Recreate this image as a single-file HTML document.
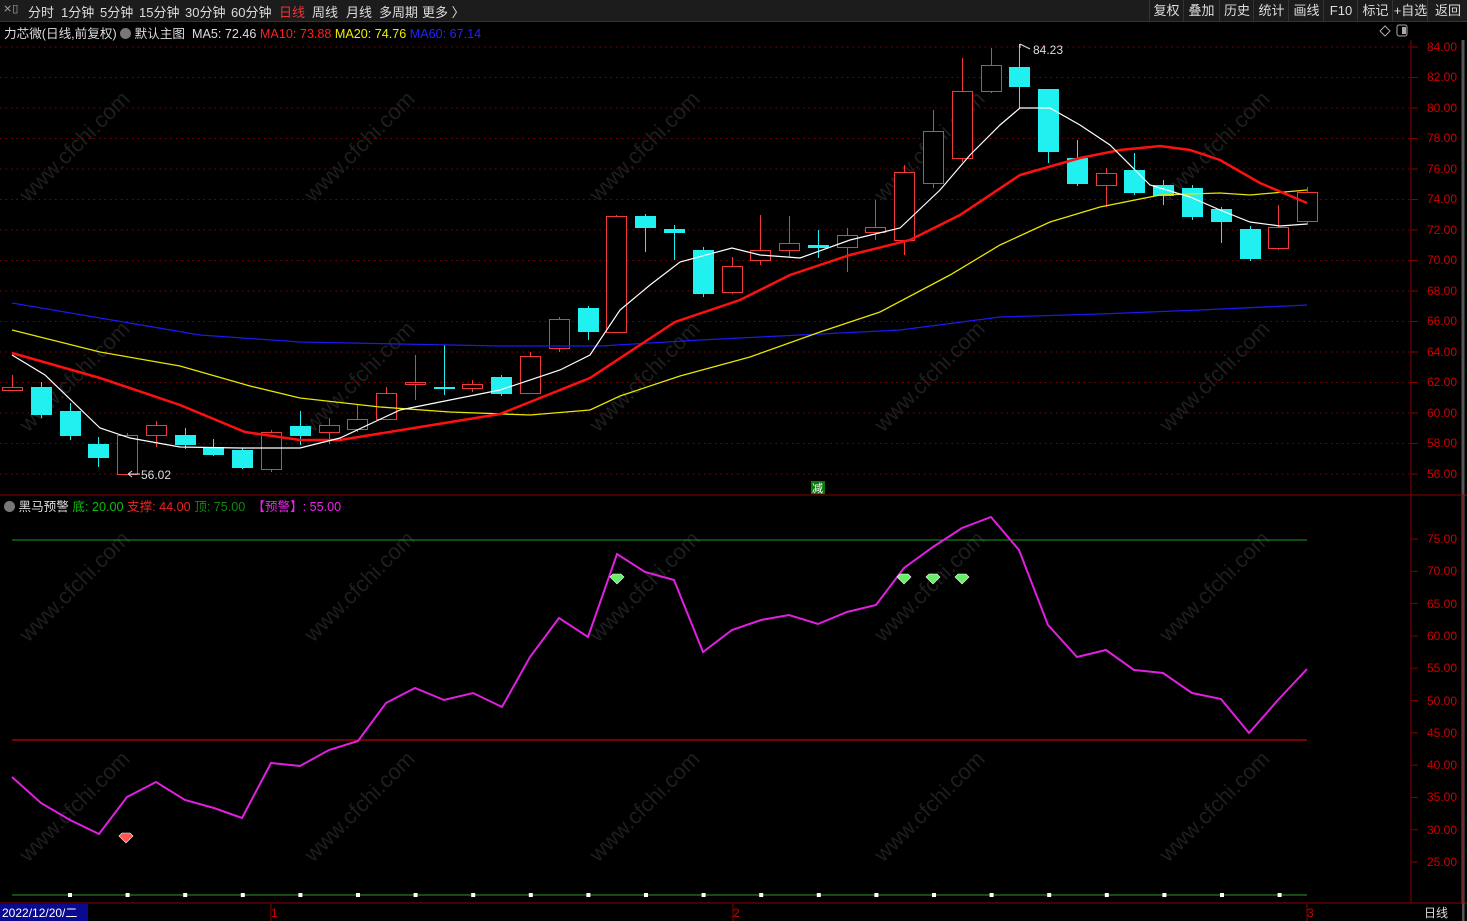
<!DOCTYPE html>
<html><head><meta charset="utf-8"><style>
*{margin:0;padding:0}
body{width:1467px;height:921px;background:#000;overflow:hidden;font-family:"Liberation Sans","Noto Sans CJK SC",sans-serif;position:relative}
.top{position:absolute;left:0;top:0;width:1467px;height:21px;background:#1c1c1c;border-bottom:1px solid #333;font-size:13px;color:#ddd}
.top span{position:absolute;top:2px}
.t{position:absolute;font-size:12.6px;white-space:nowrap}
.rb{position:absolute;top:0;height:21px;border-left:1px solid #333;font-size:13px;color:#ddd;line-height:21px;text-align:center}
</style></head><body>
<div class="top">
<span style="left:3px;color:#aaa;font-size:11px">⨯▯</span>
<span style="left:28px">分时</span><span style="left:61px">1分钟</span><span style="left:100px">5分钟</span><span style="left:139px">15分钟</span><span style="left:185px">30分钟</span><span style="left:231px">60分钟</span><span style="left:279px;color:#e33">日线</span><span style="left:312px">周线</span><span style="left:346px">月线</span><span style="left:379px">多周期</span><span style="left:422px">更多 〉</span>
</div>
<div class="rb" style="left:1149px;width:33px">复权</div>
<div class="rb" style="left:1183px;width:35px">叠加</div>
<div class="rb" style="left:1219px;width:34px">历史</div>
<div class="rb" style="left:1253px;width:35px">统计</div>
<div class="rb" style="left:1288px;width:35px">画线</div>
<div class="rb" style="left:1323px;width:34px">F10</div>
<div class="rb" style="left:1357px;width:35px">标记</div>
<div class="rb" style="left:1392px;width:35px">+自选</div>
<div class="rb" style="left:1427px;width:40px">返回</div>

<div class="t" style="left:4px;top:23px;color:#ddd">力芯微(日线,前复权) <span style="display:inline-block;width:11px;height:11px;border-radius:6px;background:#777;vertical-align:-1px"></span> 默认主图 &nbsp;MA5: 72.46 <span style="color:#f22">MA10: 73.88</span> <span style="color:#ee0">MA20: 74.76</span> <span style="color:#22f">MA60: 67.14</span></div>
<div class="t" style="left:4px;top:496px;color:#ddd"><span style="display:inline-block;width:11px;height:11px;border-radius:6px;background:#777;vertical-align:-1px"></span> 黑马预警 <span style="color:#1b1">底: 20.00</span> <span style="color:#e22">支撑: 44.00</span> <span style="color:#181">顶: 75.00</span> &nbsp;<span style="color:#e2e">【预警】: 55.00</span></div>

<svg id="s" width="1467" height="921" style="position:absolute;left:0;top:0" xmlns="http://www.w3.org/2000/svg">
<g id="grid"></g>
<line x1="1411" y1="40" x2="1411" y2="903" stroke="#8a0000"/>
<line x1="0" y1="495" x2="1467" y2="495" stroke="#8a0000"/>
<line x1="0" y1="903" x2="1467" y2="903" stroke="#8a0000"/>
<line x1="1463" y1="40" x2="1463" y2="921" stroke="#555" stroke-width="3"/>
<rect x="1411" y="495" width="52" height="408" fill="none" stroke="#8a0000"/>
<g font-size="12" fill="#c00" font-family="Liberation Sans">
<text x="1427" y="51">84.00</text><text x="1427" y="81">82.00</text><text x="1427" y="112">80.00</text><text x="1427" y="142">78.00</text><text x="1427" y="173">76.00</text><text x="1427" y="203">74.00</text><text x="1427" y="234">72.00</text><text x="1427" y="264">70.00</text><text x="1427" y="295">68.00</text><text x="1427" y="325">66.00</text><text x="1427" y="356">64.00</text><text x="1427" y="386">62.00</text><text x="1427" y="417">60.00</text><text x="1427" y="447">58.00</text><text x="1427" y="478">56.00</text>
<text x="1427" y="543">75.00</text><text x="1427" y="575">70.00</text><text x="1427" y="608">65.00</text><text x="1427" y="640">60.00</text><text x="1427" y="672">55.00</text><text x="1427" y="705">50.00</text><text x="1427" y="737">45.00</text><text x="1427" y="769">40.00</text><text x="1427" y="801">35.00</text><text x="1427" y="834">30.00</text><text x="1427" y="866">25.00</text>
</g>
<g id="wm" font-size="22" fill="#1e1e1e" font-family="Liberation Sans"></g>
<g id="cd"></g>
<polyline fill="none" stroke="#1a1aee" stroke-width="1.3" points="12,303 100,318 200,335 300,342 400,344 500,346 600,346 700,340 800,335 900,330 1000,317 1100,314 1200,310 1307,305"/>
<polyline fill="none" stroke="#e6e600" stroke-width="1.3" points="12,330 100,352 180,366 250,386 300,398 380,407 450,412 530,415 590,410 620,396 680,376 750,357 820,332 880,312 950,275 1000,245 1050,222 1100,207 1160,195 1220,193 1250,195 1307,190"/>
<polyline fill="none" stroke="#ff1010" stroke-width="2.5" points="12,353 100,378 180,405 245,432 300,440 340,440 420,427 500,414 590,378 640,345 675,322 740,300 790,275 850,255 910,240 960,215 1020,175 1080,158 1120,150 1160,146 1190,150 1220,160 1260,183 1307,203"/>
<polyline fill="none" stroke="#fff" stroke-width="1.2" points="12,355 45,375 100,428 130,438 180,447 240,448 300,448 340,438 400,410 500,390 560,370 590,355 620,310 650,285 680,262 732,248 760,255 800,258 850,240 900,228 940,190 970,155 1000,125 1020,108 1050,108 1080,125 1110,145 1150,185 1190,197 1220,210 1250,222 1280,226 1307,224"/>
<text x="141" y="479" font-size="12" fill="#ddd">56.02</text><path d="M128 474 L140 474 M128 474 l4 -3 M128 474 l4 3" stroke="#ddd" fill="none"/>
<text x="1033" y="54" font-size="12" fill="#ddd">84.23</text><path d="M1020 44 l0 4 M1020 44 l10 5" stroke="#ddd" fill="none"/>
<rect x="811" y="481" width="14" height="13" fill="#0a7a0a"/><text x="812" y="492" font-size="11" fill="#fff">减</text>
<path d="M1380 31 l5 -5 l5 5 l-5 5z" fill="none" stroke="#aaa"/><rect x="1397" y="25" width="10" height="11" rx="2" fill="none" stroke="#aaa"/><rect x="1402" y="27" width="4" height="7" fill="#aaa"/>
<line x1="12" y1="540" x2="1307" y2="540" stroke="#1a9a1a"/>
<line x1="12" y1="740" x2="1307" y2="740" stroke="#e00"/>
<polyline fill="none" stroke="#e020e0" stroke-width="2" points="12,777 41,803 70,820 99,834 127,797 156,782 185,800 214,808 242,818 271,763 300,766 329,750 358,741 386,703 415,688 444,700 473,693 502,707 530,657 559,618 588,637 617,554 645,572 674,580 703,652 732,630 761,620 789,615 818,624 847,612 876,605 904,568 933,547 962,528 991,517 1019,550 1048,625 1077,657 1106,650 1134,670 1163,673 1192,693 1221,699 1249,733 1278,700 1307,669"/>
<g id="dm"></g>
<line x1="12" y1="895" x2="1307" y2="895" stroke="#2a9a2a"/>
<g id="dots"></g>
<rect x="0" y="904" width="88" height="17" fill="#0a0a90"/>
<text x="2" y="917" font-size="12" fill="#fff">2022/12/20/二</text>
<text x="271" y="917" font-size="12" fill="#c00">1</text><line x1="271" y1="904" x2="271" y2="921" stroke="#8a0000"/>
<text x="733" y="917" font-size="12" fill="#c00">2</text><line x1="733" y1="904" x2="733" y2="921" stroke="#8a0000"/>
<text x="1307" y="917" font-size="12" fill="#c00">3</text><line x1="1307" y1="904" x2="1307" y2="921" stroke="#8a0000"/>
<rect x="1412" y="904" width="50" height="17" fill="#000"/><text x="1424" y="917" font-size="12" fill="#ddd">日线</text>
</svg>
<script>
var g=document.getElementById("grid"),h="";
for(var i=0;i<15;i++){var y=47+i*30.5;h+='<line x1="0" x2="1411" y1="'+y+'" y2="'+y+'" stroke="#8a0000" stroke-dasharray="1.5,4"/><line x1="1411" x2="1418" y1="'+y+'" y2="'+y+'" stroke="#8a0000"/>';}
for(var i=0;i<11;i++){var y=539+i*32.3;h+='<line x1="1411" x2="1418" y1="'+y+'" y2="'+y+'" stroke="#8a0000"/>';}
g.innerHTML=h;
var C=[[0,387,390,375,390],[1,387,415,382,418],[1,411,436,403,440],[1,444,458,437,467],[0,435,474,433,474],[0,425,435,421,447],[1,435,445,428,449],[1,447,455,439,456],[1,450,468,448,469],[0,432,469,430,472],[1,426,436,411,445],[0,425,432,418,444],[0,419,429,405,432],[0,393,419,387,420],[0,382,384,355,400],[1,387,389,345,395],[0,384,388,380,392],[1,377,394,375,396],[0,356,393,352,394],[0,319,348,317,352],[1,308,332,306,340],[0,216,332,215,333],[1,216,228,214,252],[1,229,233,225,260],[1,250,294,247,297],[0,266,292,257,294],[0,250,260,215,265],[0,243,250,216,257],[1,245,248,230,258],[0,235,247,228,272],[0,227,232,200,240],[0,172,240,165,255],[0,131,183,110,188],[0,91,158,58,162],[0,65,91,48,93],[1,67,87,44,108],[1,89,152,89,163],[1,158,184,140,186],[0,173,185,168,207],[1,170,193,153,195],[1,185,196,180,205],[1,188,217,185,220],[1,209,222,207,243],[1,229,259,226,261],[0,227,248,205,250],[0,192,221,187,225]];
h="";C.forEach(function(c,i){var x=Math.round(12+i*28.78);var col=c[0]?"#20f0f0":"#f03a3a";
h+='<line x1="'+x+'.5" x2="'+x+'.5" y1="'+c[3]+'" y2="'+c[4]+'" stroke="'+col+'"/>';
if(c[0])h+='<rect x="'+(x-10)+'" y="'+c[1]+'" width="21" height="'+Math.max(2,c[2]-c[1])+'" fill="'+col+'"/>';
else h+='<rect x="'+(x-10)+'.5" y="'+c[1]+'.5" width="20" height="'+Math.max(1,c[2]-c[1])+'" fill="#000" stroke="'+col+'"/>';});
document.getElementById("cd").innerHTML=h;
h="";[[126,839,"#f55"],[617,580,"#6e6"],[904,580,"#6e6"],[933,580,"#6e6"],[962,580,"#6e6"]].forEach(function(d){h+='<path d="M'+(d[0]-7)+' '+(d[1]-3)+' l3 -3 h8 l3 3 l-7 7z" fill="'+d[2]+'" stroke="#fff" stroke-width="0.6"/>';});
document.getElementById("dm").innerHTML=h;
h="";for(var x=70;x<1300;x+=57.6){h+='<rect x="'+(x-2)+'" y="893" width="4" height="4" fill="#fff"/>';}
document.getElementById("dots").innerHTML=h;
h="";[150,380,590,810].forEach(function(y){[0,285,570,855,1140].forEach(function(x){h+='<text x="'+x+'" y="'+(y+15)+'" transform="rotate(-45 '+(x+60)+' '+y+')">www.cfchi.com</text>';});});
document.getElementById("wm").innerHTML=h;
</script>
</body></html>
